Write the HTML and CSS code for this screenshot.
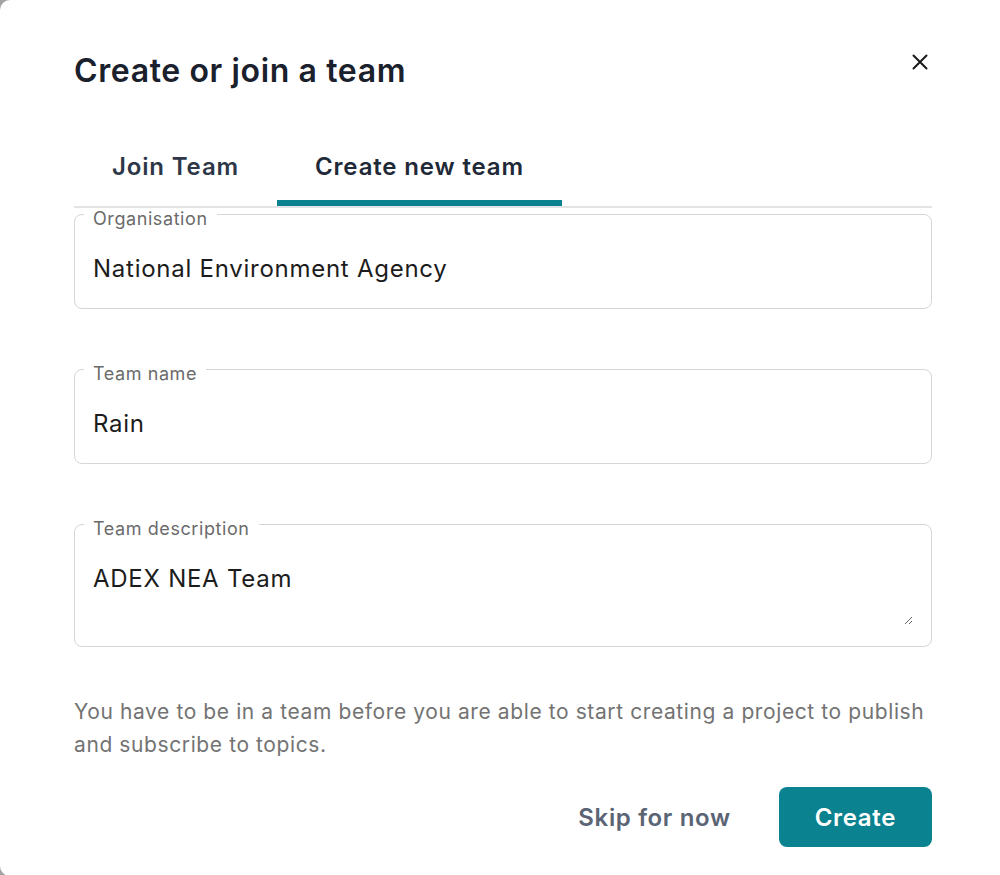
FILE: index.html
```html
<!DOCTYPE html>
<html lang="en">
<head>
<meta charset="utf-8">
<title>Create or join a team</title>
<link rel="stylesheet" href="styles.css">
</head>
<body>
<div class="modal">
  <header class="modal-header">
    <h1 class="modal-title">Create or join a team</h1>
    <button class="close-btn" type="button" aria-label="Close">
      <svg width="16" height="16" viewBox="0 0 16 16" aria-hidden="true">
        <path d="M1.5 1.5 L14.5 14.5 M14.5 1.5 L1.5 14.5" stroke="#1a1a1a" stroke-width="2" stroke-linecap="round" fill="none"/>
      </svg>
    </button>
  </header>

  <nav class="tabs">
    <button class="tab" type="button">Join Team</button>
    <button class="tab tab-active" type="button">Create new team</button>
  </nav>

  <form class="form">
    <div class="field">
      <label class="field-label">Organisation</label>
      <input class="field-input" type="text" value="National Environment Agency">
    </div>
    <div class="field">
      <label class="field-label">Team name</label>
      <input class="field-input" type="text" value="Rain">
    </div>
    <div class="field">
      <label class="field-label">Team description</label>
      <textarea class="field-textarea">ADEX NEA Team</textarea>
    </div>
  </form>

  <p class="helper">You have to be in a team before you are able to start creating a project to publish and subscribe to topics.</p>

  <footer class="footer">
    <button class="btn btn-ghost" type="button">Skip for now</button>
    <button class="btn btn-primary" type="button">Create</button>
  </footer>
</div>
</body>
</html>
```

FILE: styles.css
```css
* {
  box-sizing: border-box;
}

html, body {
  margin: 0;
  padding: 0;
}

body {
  background: #a3a3a3;
  font-family: Inter, "Noto Sans", "Liberation Sans", sans-serif;
  overflow: hidden;
  width: 1000px;
  height: 875px;
}

.modal {
  width: 1000px;
  height: 876px;
  background: #ffffff;
  border-radius: 10px 0 0 10px;
  padding: 49px 68px 28px 74px;
  display: flex;
  flex-direction: column;
}

.modal-header {
  display: flex;
  justify-content: space-between;
  align-items: flex-start;
}

.modal-title {
  margin: 0;
  font-size: 32px;
  line-height: 44px;
  font-weight: 600;
  letter-spacing: 0.62px;
  color: #1a202c;
}

.close-btn {
  width: 48px;
  height: 48px;
  margin: -11px -12px 0 0;
  border: none;
  background: transparent;
  display: flex;
  align-items: center;
  justify-content: center;
  padding: 0;
  cursor: pointer;
}

.tabs {
  display: flex;
  margin-top: 41px;
  border-bottom: 2px solid #e4e4e7;
}

.tab {
  font-family: inherit;
  font-size: 24px;
  line-height: 36px;
  font-weight: 600;
  letter-spacing: 0.85px;
  color: #2d3748;
  background: transparent;
  border: none;
  border-bottom: 6px solid transparent;
  padding: 15px 38px 15px;
  cursor: pointer;
}

.tab-active {
  border-bottom-color: #0a8290;
  color: #1f2937;
}

.form {
  margin-top: 6px;
  display: flex;
  flex-direction: column;
  gap: 60px;
}

.field {
  position: relative;
  border: 1px solid #d6d6d6;
  border-radius: 8px;
  padding: 36px 18px 21px 18px;
}

.field-label {
  position: absolute;
  top: -7px;
  left: 9px;
  padding: 0 9px;
  background: #ffffff;
  font-size: 18px;
  line-height: 22px;
  letter-spacing: 0.58px;
  color: #6b6b6b;
}

.field-input,
.field-textarea {
  display: block;
  width: 100%;
  border: none;
  outline: none;
  padding: 0;
  margin: 0;
  font-family: inherit;
  font-size: 24px;
  line-height: 36px;
  letter-spacing: 0.74px;
  color: #1c1c1c;
  background: transparent;
}

.field-input {
  height: 36px;
}

.field-textarea {
  height: 64px;
  resize: vertical;
}

.helper {
  margin: 48px 0 0;
  font-size: 21px;
  line-height: 33px;
  letter-spacing: 0.6px;
  color: #737373;
}

.footer {
  margin-top: 26px;
  display: flex;
  justify-content: flex-end;
  gap: 12px;
}

.btn {
  height: 60px;
  padding: 0 36px;
  border: none;
  border-radius: 8px;
  font-family: inherit;
  font-size: 24px;
  font-weight: 600;
  letter-spacing: 0.65px;
  cursor: pointer;
}

.btn-ghost {
  background: transparent;
  color: #5a6474;
}

.btn-primary {
  background: #0a8290;
  color: #ffffff;
}
```
